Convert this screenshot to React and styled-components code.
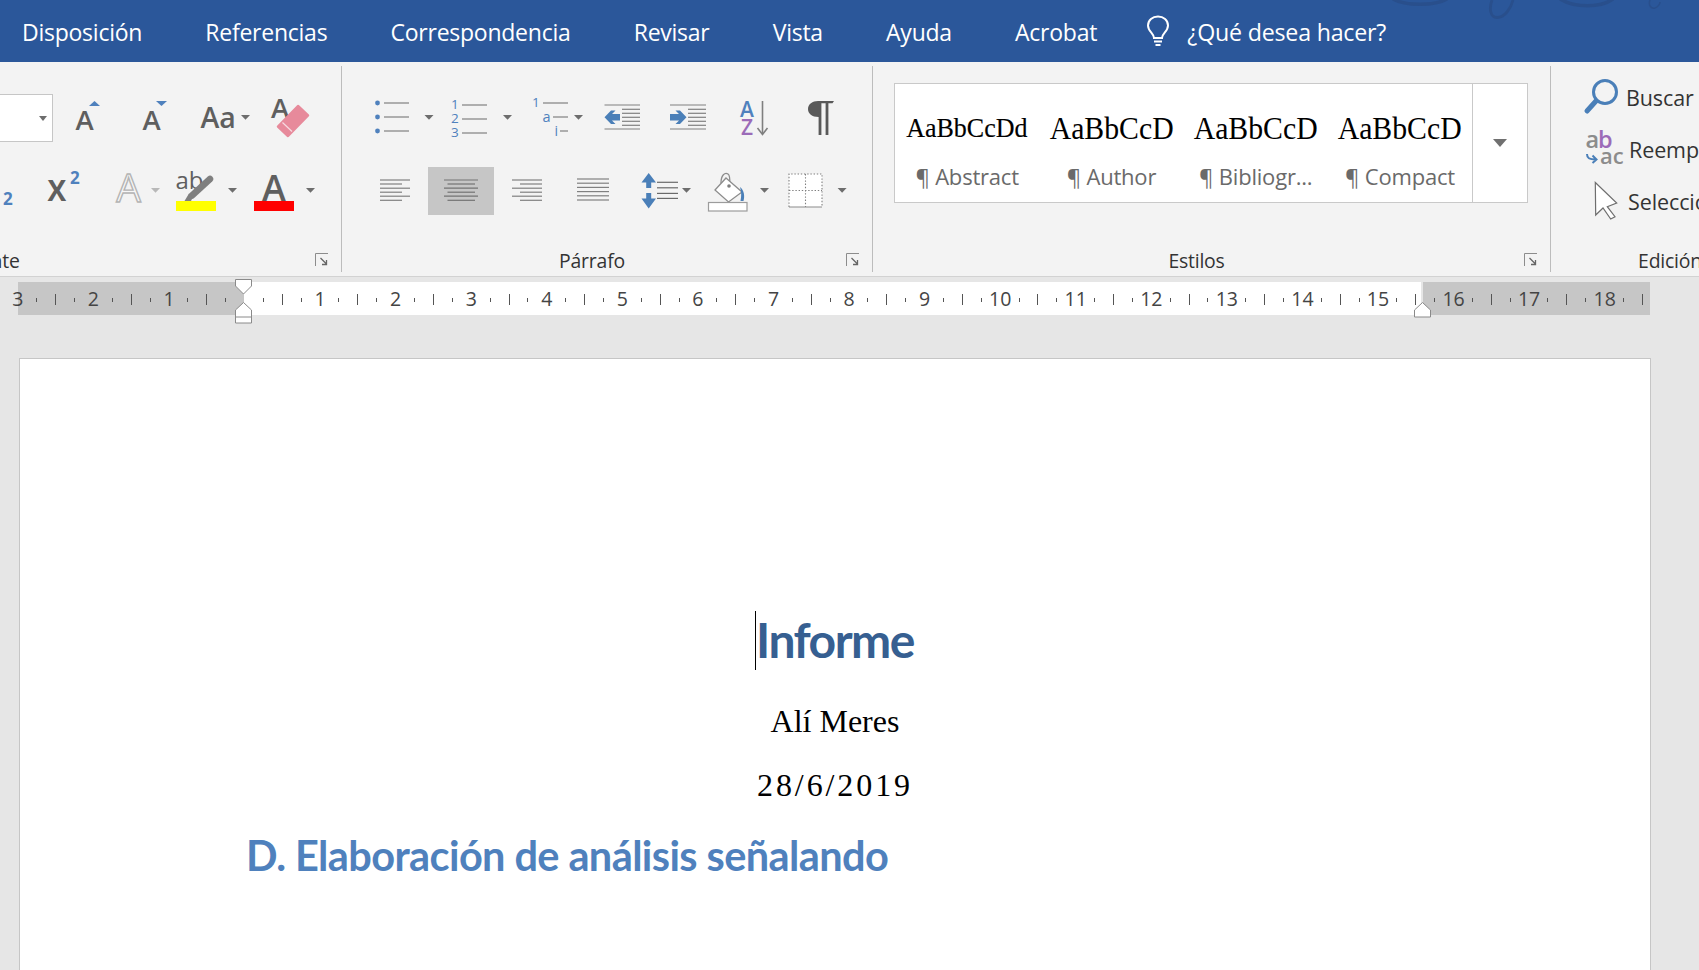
import React from "react";
import styled, { createGlobalStyle } from "styled-components";

const UI = `"Open Sans", "Noto Sans", sans-serif`;
const BLUE = "#4f81bd";
const GREY = "#5f5f5f";
const LINE = "#808080";
const R1 = 90;
const R2 = 163;
const RH = 56;

const Global = createGlobalStyle`
  html, body { margin: 0; padding: 0; height: 100%; overflow: hidden; background: #e6e6e6; }
  #root { height: 100%; }
`;

const Shell = styled.div`
  width: 1699px; height: 970px; overflow: hidden; display: flex; flex-direction: column;
  font-family: ${UI}; background: #e6e6e6;
`;
const MenuBar = styled.nav`
  position: relative; flex: none; height: 62px; background: #2b579a; color: #fff;
  display: flex; align-items: center; gap: 63.2px; padding-left: 22px;
`;
const MenuItem = styled.span`
  font-size: 23px; white-space: nowrap; letter-spacing: -0.25px; position: relative; top: 1px;
`;
const TellMe = styled.span`
  display: flex; align-items: center; gap: 16px; font-size: 23.2px; white-space: nowrap; letter-spacing: -0.2px; margin-left: -15px;
`;
const TellMeText = styled.span`
  position: relative; top: 1px;
`;
const Flourish = styled.svg`
  position: absolute; right: 0; top: 0;
`;
const Ribbon = styled.section`
  flex: none; height: 215px; box-sizing: border-box; background: #f3f3f3; border-bottom: 1px solid #d2d2d2;
  display: flex; overflow: hidden;
`;
const Group = styled.div`
  flex: none; box-sizing: border-box; width: ${p => p.$w}px; margin: 4px 0 4px ${p => p.$ml || 0}px;
  padding: ${p => p.$pt}px 0 0 ${p => p.$pl || 0}px; height: 206px;
  border-right: ${p => (p.$last ? "none" : "1.5px solid #bcbcbc")};
  display: flex; flex-direction: column;
`;
const ToolRow = styled.div`
  display: flex; align-items: center; height: ${RH}px; margin-bottom: 17px;
`;
const LabelRow = styled.div`
  margin: auto 0 0 ${p => p.$ml || 0}px; display: flex; align-items: center; height: 24px; padding-right: 12px;
`;
const GroupLabel = styled.span`
  flex: 1; text-align: center; font-size: 19.4px; color: #333; white-space: nowrap; letter-spacing: -0.2px;
`;
const Launcher = styled.svg`
  flex: none; margin-left: 4px; display: block;
`;
const IconSvg = styled.svg`
  flex: none; display: block; overflow: visible;
`;
const FontBox = styled.div`
  flex: none; box-sizing: border-box; width: 55px; height: 48px; margin-left: -2px; background: #fff;
  border: 1px solid #c6c6c6; display: flex; align-items: center; justify-content: flex-end; padding-right: 5px;
`;
const Caret = styled.i`
  display: block; width: 0; height: 0; border-left: 4.5px solid transparent; border-right: 4.5px solid transparent;
  border-top: 5px solid #6d6d6d;
`;
const AlignButton = styled.div`
  flex: none; width: 66px; height: 48px; background: #c6c6c6; display: flex; align-items: center; justify-content: center;
`;
const Gallery = styled.div`
  width: 634px; height: 120px; box-sizing: border-box; margin-left: 21px; background: #fff; border: 1px solid #c9c9c9; display: flex;
`;
const StyleCell = styled.div`
  flex: none; width: 144.3px; display: flex; flex-direction: column; align-items: center; padding-top: 24px; box-sizing: border-box;
`;
const StylePreview = styled.div`
  font-family: "Liberation Serif", serif; color: #000; line-height: 40px; white-space: nowrap;
  font-size: ${p => p.$size}px; transform: scaleX(${p => p.$sx}); -webkit-text-stroke: ${p => p.$stroke || 0}px #000;
`;
const StyleName = styled.div`
  margin-top: 13px; line-height: 30px; font-size: 22px; color: #6a6a6a; white-space: nowrap; letter-spacing: -0.2px;
`;
const GalleryScroll = styled.div`
  flex: 1; border-left: 1px solid #c9c9c9; display: flex; align-items: center; justify-content: center;
`;
const ScrollCaret = styled.i`
  display: block; width: 0; height: 0; border-left: 7px solid transparent; border-right: 7px solid transparent;
  border-top: 8px solid #707070;
`;
const EditRow = styled.div`
  display: flex; align-items: center; height: 52px;
`;
const EditText = styled.span`
  font-size: 21.5px; color: #333; white-space: nowrap; letter-spacing: -0.1px;
`;
const Workspace = styled.main`
  flex: 1; min-height: 0; background: #e6e6e6; padding-top: 5px;
`;
const Ruler = styled.div`
  position: relative; width: 1632px; height: 33px; margin-left: 18px;
  background: linear-gradient(to right, #c6c6c6 0 226px, #fff 226px 1403px, #e6e6e6 1403px 1405px, #c6c6c6 1405px);
`;
const RulerTrack = styled.div`
  display: flex; height: 100%; margin-left: -9.6px; width: max-content;
`;
const RulerSlot = styled.div`
  flex: none; width: 18.9px; display: flex; align-items: center; justify-content: center;
  overflow: visible;
`;
const RulerNum = styled.span`
  font-size: 19.5px; color: #444; line-height: 1; white-space: nowrap;
`;
const RulerTick = styled.i`
  display: block; width: 1px; height: ${p => (p.$long ? 11 : 4)}px; background: #555; position: relative; top: 1px;
`;
const RulerMarker = styled.svg`
  position: absolute; left: ${p => p.$x - 18}px; top: ${p => p.$y - 282}px; display: block;
`;
const Page = styled.article`
  width: 1632px; box-sizing: border-box; margin: 43px 0 0 19px; height: 800px; background: #fff; border: 1px solid #c6c6c6;
  padding: 251px 0 0 226px;
`;
const Centered = styled.div`
  margin-left: -226px; text-align: center;
`;
const Title = styled.h1`
  margin: 0; display: inline-block; position: relative; font: 700 48px/60px Lato, "Open Sans", sans-serif; color: #365f91; letter-spacing: -1.5px;
`;
const TextCursor = styled.i`
  position: absolute; left: -1.5px; top: 1px; width: 1.5px; height: 59px; background: #000;
`;
const Byline = styled.p`
  margin: ${p => p.$mt}px 0 0; font: 400 32px/40px "Liberation Serif", serif; color: #000; letter-spacing: ${p => p.$ls || 0}px;
`;
const Heading = styled.h2`
  margin: 25px 0 0; font: 700 41.5px/50px Lato, "Open Sans", sans-serif; color: #4f81bd; letter-spacing: -0.6px; white-space: nowrap;
`;

const Icon = ({ x, to, y = R1, h = RH, children }) => (
  <IconSvg width={to - x} height={h} viewBox={`${x} ${y} ${to - x} ${h}`}>{children}</IconSvg>
);
const Tx = ({ x, y, s, fill = GREY, w = 600, anchor = "start", children, ...rest }) => (
  <text x={x} y={y} fontSize={s} fill={fill} fontWeight={w} textAnchor={anchor} fontFamily={UI} {...rest}>{children}</text>
);
const Drop = ({ x, y = 115, fill = "#6d6d6d" }) => (
  <polygon points={`${x},${y} ${x + 9},${y} ${x + 4.5},${y + 4.8}`} fill={fill} />
);
const Ln = ({ a, b, y, c = LINE, w = 1.2 }) => <line x1={a} x2={b} y1={y} y2={y} stroke={c} strokeWidth={w} />;

const Bullets = () => (
  <Icon x={342} to={440}>
    {[103, 117, 131].map(y => (
      <g key={y}>
        <circle cx={377.5} cy={y} r={2.4} fill={BLUE} />
        <Ln a={384} b={409} y={y} />
      </g>
    ))}
    <Drop x={424.5} />
  </Icon>
);
const Numbering = () => (
  <Icon x={440} to={520}>
    {[1, 2, 3].map((n, i) => (
      <g key={n}>
        <Tx x={451} y={108.5 + i * 14} s={13.5} fill={BLUE} w={400}>{n}</Tx>
        <Ln a={462} b={487} y={105 + i * 14} />
      </g>
    ))}
    <Drop x={503} />
  </Icon>
);
const Multilevel = () => (
  <Icon x={520} to={594}>
    <Tx x={532} y={107} s={13.5} fill={BLUE} w={400}>1</Tx>
    <Ln a={543} b={568} y={103} />
    <Tx x={542.5} y={121.5} s={14.5} fill={BLUE} w={400}>a</Tx>
    <Ln a={553} b={568} y={117} />
    <Tx x={554.5} y={135.5} s={14} fill={BLUE} w={400}>i</Tx>
    <Ln a={560} b={568} y={131} />
    <Drop x={574} />
  </Icon>
);
const IndentLines = ({ a, b, ia, ib }) => (
  <>
    <Ln a={a} b={b} y={105} />
    {[109.3, 113.3, 117.3, 121.3, 125.3].map(y => <Ln key={y} a={ia} b={ib} y={y} />)}
    <Ln a={a} b={b} y={129} />
  </>
);
const Decrease = () => (
  <Icon x={594} to={655}>
    <IndentLines a={604.5} b={640} ia={622} ib={640} />
    <polygon points="604.5,117.3 611,110.5 615.5,110.5 612,114 620,114 620,120.5 612,120.5 615.5,124 611,124" fill="#4a7fb8" />
  </Icon>
);
const Increase = () => (
  <Icon x={655} to={725}>
    <IndentLines a={670} b={706} ia={688} ib={706} />
    <polygon points="686.5,117.3 680,110.5 675.5,110.5 679,114 670,114 670,120.5 679,120.5 675.5,124 680,124" fill="#4a7fb8" />
  </Icon>
);
const Sort = () => (
  <Icon x={725} to={790}>
    <Tx x={747} y={117} s={21} fill={BLUE} anchor="middle">A</Tx>
    <Tx x={747} y={135} s={21} fill="#9b6bb8" anchor="middle">Z</Tx>
    <line x1={762.5} x2={762.5} y1={101} y2={134} stroke="#7f7f7f" strokeWidth={1.6} />
    <polyline points="757.5,128 762.5,134.5 767.5,128" fill="none" stroke="#7f7f7f" strokeWidth={1.6} />
  </Icon>
);
const Pilcrow = () => (
  <Icon x={790} to={872}>
    <path d="M834 101 L832.5 103.2 L828.4 103.2 L828.4 135 L825.6 135 L825.6 103.2 L821.4 103.2 L821.4 135 L818.6 135 L818.6 117 C812 117 808 113.5 808 109 C808 104 812.5 101 818 101 Z" fill="#595959" />
  </Icon>
);
const alignYs = [180, 184, 188.2, 192.2, 196.2, 200.3];
const AlignLeft = () => (
  <Icon x={342} to={428} y={R2}>
    {alignYs.map((y, i) => <Ln key={y} a={380} b={i % 2 ? 402 : 410} y={y} />)}
  </Icon>
);
const AlignCenter = () => (
  <IconSvg width={66} height={48} viewBox="428 167 66 48">
    {alignYs.map((y, i) => <Ln key={y} a={i % 2 ? 447.5 : 444} b={i % 2 ? 475 : 478} y={y} c="#737373" />)}
  </IconSvg>
);
const AlignRight = () => (
  <Icon x={494} to={558} y={R2}>
    {alignYs.map((y, i) => <Ln key={y} a={i % 2 ? 520 : 512} b={542} y={y} />)}
  </Icon>
);
const Justify = () => (
  <Icon x={558} to={632} y={R2}>
    {[179, 183.2, 187.4, 191.6, 195.8, 200].map(y => <Ln key={y} a={577} b={609} y={y} />)}
  </Icon>
);
const LineSpacing = () => (
  <Icon x={632} to={700} y={R2}>
    <path d="M648.7 173 L656 182.5 L651.2 182.5 L651.2 188 L646.2 188 L646.2 182.5 L641.5 182.5 Z M646.2 193 L651.2 193 L651.2 198.5 L656 198.5 L648.7 208.5 L641.5 198.5 L646.2 198.5 Z" fill="#4a7fb8" />
    {[182.3, 187.8, 193.4, 198.4].map(y => <Ln key={y} a={657} b={678} y={y} c="#6a6a6a" />)}
    <Drop x={682} y={188} />
  </Icon>
);
const Shading = () => (
  <Icon x={700} to={778} y={R2}>
    <path d="M721 183 C721 175 725 172 728 174 C731 176 729.5 183 729.5 188" fill="none" stroke="#8c8c8c" strokeWidth={1.3} />
    <polygon points="726,178 742,192 728.5,202 715,190" fill="#fff" stroke="#8c8c8c" strokeWidth={1.3} />
    <circle cx={729} cy={186} r={1.8} fill="#7f7f7f" />
    <path d="M740 187 C744 190 745 196 743.5 201 L740.5 201 C741.5 196 741.5 192 740 187 Z" fill="#4a7fb8" />
    <rect x={708.5} y={202.5} width={38.5} height={8.5} fill="#fff" stroke="#9c9c9c" strokeWidth={1.2} />
    <Drop x={760} y={188} />
  </Icon>
);
const Borders = () => (
  <Icon x={778} to={872} y={R2}>
    <rect x={789} y={174} width={33} height={33} fill="#fff" />
    <g stroke="#7f7f7f" strokeWidth={1.1} strokeDasharray="1.4 1.8" fill="none">
      <path d="M789 207 V174 H822 V207 M805.5 174 V207 M789 190.5 H822" />
    </g>
    <Ln a={789} b={822} y={207} c="#8c8c8c" />
    <Drop x={837.6} y={188} />
  </Icon>
);

const LauncherIcon = () => (
  <Launcher width={14} height={14} viewBox="0 0 14 14">
    <path d="M13 .5 H.5 V13" fill="none" stroke="#8c8c8c" strokeWidth={1} />
    <path d="M5.5 5 L11 10.5 M11.5 7 V11.5 H7" fill="none" stroke="#666" strokeWidth={1.3} />
  </Launcher>
);

const menu = ["Disposición", "Referencias", "Correspondencia", "Revisar", "Vista", "Ayuda", "Acrobat"];
const gallery = [
  { preview: "AaBbCcDd", size: 26.5, sx: 0.98, stroke: 0.15, name: "¶ Abstract" },
  { preview: "AaBbCcD", size: 32, sx: 0.93, name: "¶ Author" },
  { preview: "AaBbCcD", size: 32, sx: 0.93, name: "¶ Bibliogr..." },
  { preview: "AaBbCcD", size: 32, sx: 0.93, name: "¶ Compact" },
];

const rulerSlots = [];
for (let n = -3; n <= 18; n++) {
  rulerSlots.push({ k: `${n}n`, num: n === 0 ? "" : String(Math.abs(n)) });
  rulerSlots.push({ k: `${n}a`, tick: "s" });
  rulerSlots.push({ k: `${n}b`, tick: "l" });
  if (n < 18) rulerSlots.push({ k: `${n}c`, tick: "s" });
}

export default function App() {
  return (
    <Shell>
      <Global />
      <MenuBar>
        {menu.map(m => <MenuItem key={m}>{m}</MenuItem>)}
        <TellMe>
          <svg width="26" height="32" viewBox="0 0 26 32">
            <path d="M9 23 C9 18.5 3 16.5 3 10.5 C3 5 7.5 1.5 13 1.5 C18.5 1.5 23 5 23 10.5 C23 16.5 17 18.5 17 23 Z" fill="none" stroke="#fff" strokeWidth="2" />
            <path d="M9 26.5 H17 M10.5 30 H15.5" stroke="#fff" strokeWidth="2" />
          </svg>
          <TellMeText>¿Qué desea hacer?</TellMeText>
        </TellMe>
        <Flourish width="320" height="22" viewBox="1379 0 320 22">
          <g fill="none" stroke="#294f8c">
            <path d="M1393 -1 C1405 6 1435 6 1447 -1" strokeWidth="3.5" />
            <path d="M1513 0 C1511 8 1505 17.5 1497 17.5 C1490 17.5 1489 8 1492 0" strokeWidth="2.8" />
            <path d="M1560 -1 C1575 8 1600 8 1613 -1" strokeWidth="3.5" />
            <path d="M1650 0 C1648 5 1651 9 1655 8 C1658 7 1660 4 1660 2" strokeWidth="1.5" />
          </g>
        </Flourish>
      </MenuBar>

      <Ribbon>
        <Group $w={675} $ml={-333} $pl={333} $pt={24}>
          <ToolRow>
            <FontBox><Caret /></FontBox>
            <Icon x={53} to={120}>
              <Tx x={84.5} y={130} s={27.5} anchor="middle">A</Tx>
              <polygon points="89,106 100,106 94.5,101" fill={BLUE} />
            </Icon>
            <Icon x={120} to={185}>
              <Tx x={151.5} y={130} s={27.5} anchor="middle">A</Tx>
              <polygon points="156,101 167,101 161.5,106" fill={BLUE} />
            </Icon>
            <Icon x={185} to={258}>
              <Tx x={200.5} y={128} s={28.5}>Aa</Tx>
              <Drop x={241} />
            </Icon>
            <Icon x={258} to={341}>
              <Tx x={280} y={118} s={27.5} anchor="middle">A</Tx>
              <path d="M298 106 L308 115.5 L288 136 L278 126.5 Z" fill="#e78a9b" stroke="#e78a9b" strokeWidth="2.5" strokeLinejoin="round" />
              <line x1="282.5" y1="122.5" x2="292" y2="131.5" stroke="#f7dbe1" strokeWidth="1.2" />
            </Icon>
          </ToolRow>
          <ToolRow>
            <Icon x={0} to={25} y={R2}>
              <Tx x={3} y={205} s={17} fill={BLUE} w={700}>2</Tx>
            </Icon>
            <Icon x={25} to={100} y={R2}>
              <Tx x={47.5} y={201} s={28} w={700}>X</Tx>
              <Tx x={70} y={184} s={17} fill={BLUE} w={700}>2</Tx>
            </Icon>
            <Icon x={100} to={170} y={R2}>
              <Tx x={128.5} y={202} s={39} fill="#f7f7f7" w={400} anchor="middle" stroke="#b4b4b4" strokeWidth="1.4">A</Tx>
              <Drop x={151} y={188} fill="#b8b8b8" />
            </Icon>
            <Icon x={170} to={245} y={R2}>
              <Tx x={175.5} y={189} s={24} w={500}>ab</Tx>
              <line x1="192" y1="195.5" x2="210" y2="179" stroke="#7f7f7f" strokeWidth="6.5" strokeLinecap="round" />
              <polygon points="184.5,201 191,201 193,197 189,193.5" fill="#7f7f7f" />
              <rect x={176} y={201} width={40} height={10} fill="#ffff00" />
              <Drop x={228} y={188} />
            </Icon>
            <Icon x={245} to={341} y={R2}>
              <Tx x={274} y={201} s={36} anchor="middle">A</Tx>
              <rect x={254} y={201} width={40} height={10} fill="#ff0000" />
              <Drop x={306} y={188} />
            </Icon>
          </ToolRow>
          <LabelRow $ml={-333}>
            <GroupLabel>Fuente</GroupLabel>
            <LauncherIcon />
          </LabelRow>
        </Group>

        <Group $w={531} $pt={24}>
          <ToolRow>
            <Bullets /><Numbering /><Multilevel /><Decrease /><Increase /><Sort /><Pilcrow />
          </ToolRow>
          <ToolRow>
            <AlignLeft />
            <AlignButton><AlignCenter /></AlignButton>
            <AlignRight /><Justify /><LineSpacing /><Shading /><Borders />
          </ToolRow>
          <LabelRow>
            <GroupLabel>Párrafo</GroupLabel>
            <LauncherIcon />
          </LabelRow>
        </Group>

        <Group $w={678} $pt={17}>
          <Gallery>
            {gallery.map(g => (
              <StyleCell key={g.name}>
                <StylePreview $size={g.size} $sx={g.sx} $stroke={g.stroke}>{g.preview}</StylePreview>
                <StyleName>{g.name}</StyleName>
              </StyleCell>
            ))}
            <GalleryScroll><ScrollCaret /></GalleryScroll>
          </Gallery>
          <LabelRow>
            <GroupLabel>Estilos</GroupLabel>
            <LauncherIcon />
          </LabelRow>
        </Group>

        <Group $w={250} $pt={5} $last>
          <EditRow>
            <Icon x={1551} to={1626} y={71} h={52}>
              <circle cx={1605} cy={92} r={11.5} fill="none" stroke="#4a7fb8" strokeWidth={3} />
              <line x1={1596} y1={101} x2={1587} y2={111} stroke="#4a7fb8" strokeWidth={5} strokeLinecap="round" />
            </Icon>
            <EditText>Buscar</EditText>
          </EditRow>
          <EditRow>
            <Icon x={1551} to={1629} y={123} h={52}>
              <Tx x={1585.5} y={148} s={23.5} fill="#8c8c8c" w={600}>a</Tx>
              <Tx x={1598} y={148} s={23.5} fill="#9b6bb8" w={600}>b</Tx>
              <Tx x={1600} y={164} s={22} fill="#8c8c8c" w={600}>ac</Tx>
              <path d="M1587 154 C1587 158 1589 159.5 1596 159.5 M1592.5 155.5 L1596.5 159.5 L1592.5 163" fill="none" stroke="#4a7fb8" strokeWidth={2} />
            </Icon>
            <EditText>Reemplazar</EditText>
          </EditRow>
          <EditRow>
            <Icon x={1551} to={1628} y={175} h={52}>
              <polygon points="1595.3,182.5 1595.7,215 1603,208 1610.7,219 1615,216.7 1607.3,206.7 1616.7,203" fill="#fff" stroke="#6f6f6f" strokeWidth={1.2} />
            </Icon>
            <EditText>Seleccionar</EditText>
          </EditRow>
          <LabelRow>
            <GroupLabel>Edición</GroupLabel>
          </LabelRow>
        </Group>
      </Ribbon>

      <Workspace>
        <Ruler>
          <RulerTrack>
            {rulerSlots.map(s => (
              <RulerSlot key={s.k}>
                {s.num ? <RulerNum>{s.num}</RulerNum> : null}
                {s.tick ? <RulerTick $long={s.tick === "l"} /> : null}
              </RulerSlot>
            ))}
          </RulerTrack>
          <RulerMarker $x={235} $y={279} width={17} height={16} viewBox="235 279 17 16">
            <polygon points="235.5,279.5 251.5,279.5 251.5,286 243.5,294 235.5,286" fill="#fff" stroke="#8a8a8a" />
          </RulerMarker>
          <RulerMarker $x={235} $y={302} width={17} height={22} viewBox="235 302 17 22">
            <polygon points="243.5,302.5 251.5,310 251.5,323 235.5,323 235.5,310" fill="#fff" stroke="#8a8a8a" />
            <line x1="235.5" x2="251.5" y1="317" y2="317" stroke="#8a8a8a" />
          </RulerMarker>
          <RulerMarker $x={1414} $y={302} width={17} height={16} viewBox="1414 302 17 16">
            <polygon points="1422.5,302.5 1430.5,310 1430.5,317 1414.5,317 1414.5,310" fill="#fff" stroke="#8a8a8a" />
          </RulerMarker>
        </Ruler>
        <Page>
          <Centered>
            <Title><TextCursor />Informe</Title>
            <Byline $mt={31}>Alí Meres</Byline>
            <Byline $mt={24} $ls={2.9}>28/6/2019</Byline>
          </Centered>
          <Heading>D. Elaboración de análisis señalando</Heading>
        </Page>
      </Workspace>
    </Shell>
  );
}
